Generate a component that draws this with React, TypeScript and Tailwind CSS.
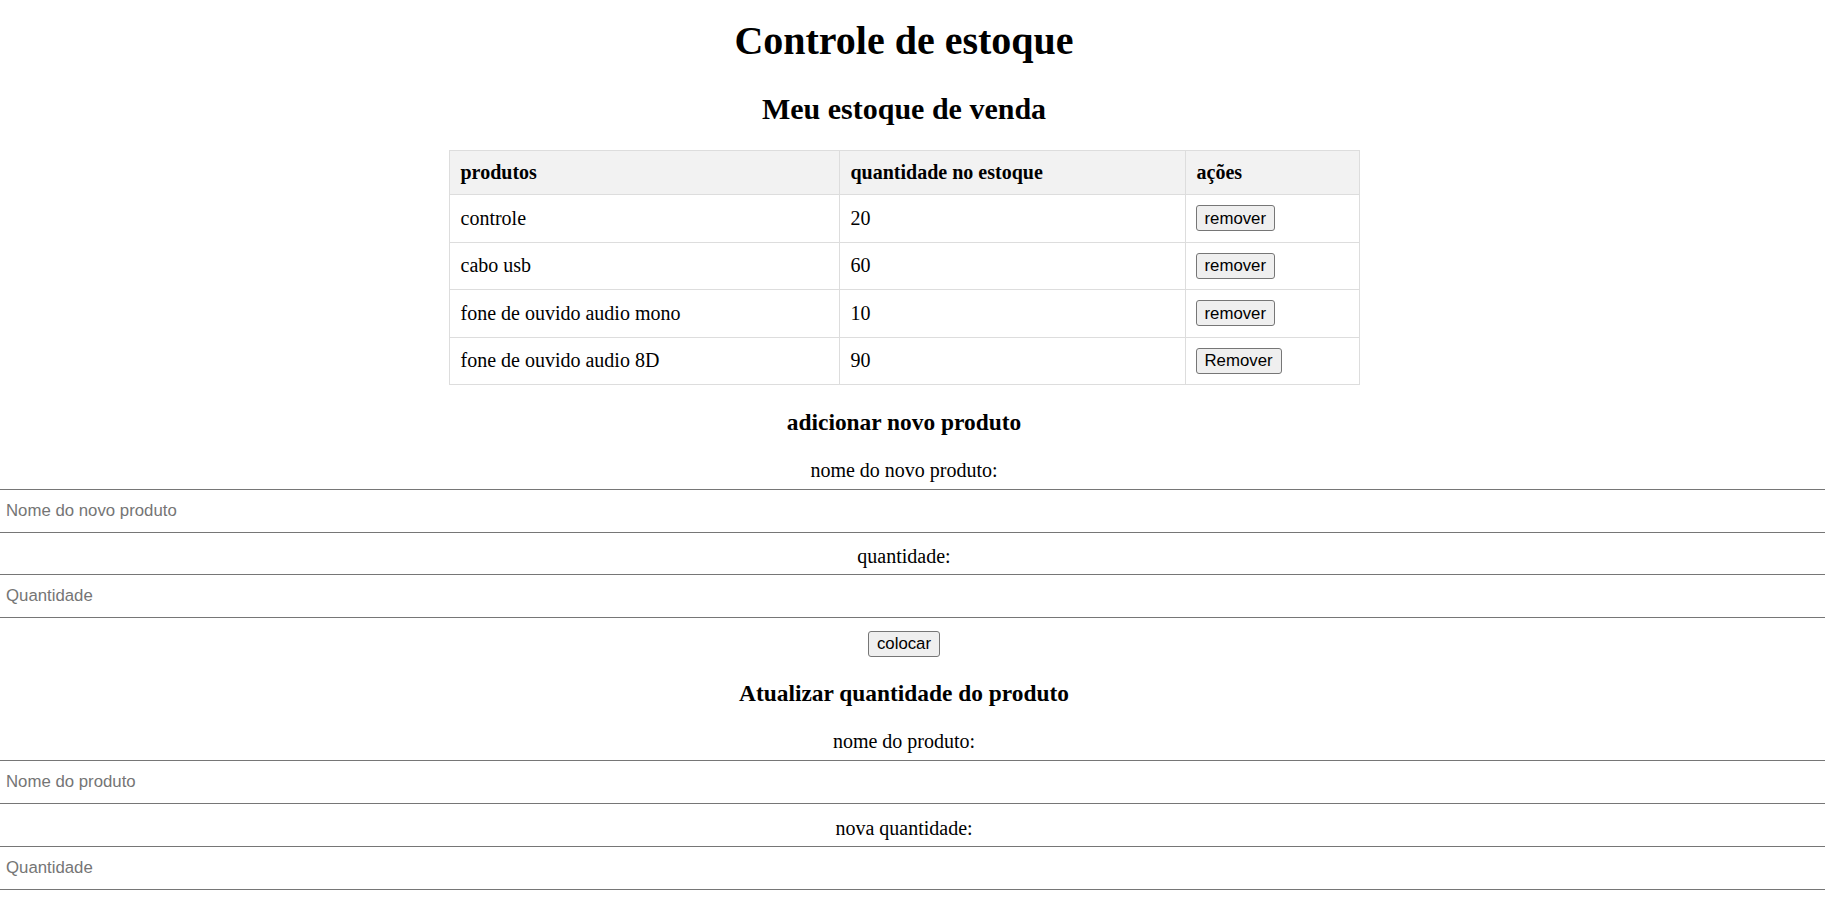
const produtos = [
  { nome: "controle", qtd: 20, acao: "remover" },
  { nome: "cabo usb", qtd: 60, acao: "remover" },
  { nome: "fone de ouvido audio mono", qtd: 10, acao: "remover" },
  { nome: "fone de ouvido audio 8D", qtd: 90, acao: "Remover" },
];

const Botao = ({ children }: { children: React.ReactNode }) => (
  <button className="h-[26px] px-[8px] border border-[#767676] rounded-[3px] bg-[#efefef] text-[16.8px] leading-[19px] text-black font-['Liberation_Sans',Arial,sans-serif]">
    {children}
  </button>
);

const Campo = ({ label, placeholder, first }: { label: string; placeholder: string; first?: boolean }) => (
  <>
    <div className={`${first ? "mt-[23.4px]" : "mt-[12.5px]"} w-[1808px] text-center text-[20px] leading-[23px]`}>
      {label}
    </div>
    <input
      placeholder={placeholder}
      className={`${first ? "mt-[7px]" : "mt-[6px]"} block w-full h-[44px] px-[6px] border-y border-[#767676] bg-white outline-none text-[16.8px] font-['Liberation_Sans',Arial,sans-serif] placeholder:text-[#757575]`}
    />
  </>
);

export default function App() {
  return (
    <div className="w-[1825px] h-[900px] overflow-hidden bg-white text-black font-['Liberation_Serif','Times_New_Roman',serif]">
      <div className="w-[1808px] text-center">
        <h1 className="pt-[17.5px] text-[40px] leading-[46px] font-bold">Controle de estoque</h1>
        <h2 className="mt-[28px] text-[30px] leading-[34.5px] font-bold">Meu estoque de venda</h2>
      </div>

      <div className="w-[1808px] mt-[24px]">
        <div className="mx-auto w-[911px] grid grid-cols-[390px_346px_174px] border-l border-t border-[#dddddd] text-left text-[20px] leading-[23px]">
          {["produtos", "quantidade no estoque", "ações"].map((h) => (
            <div key={h} className="h-[44px] px-[11px] flex items-center bg-[#f2f2f2] font-bold border-r border-b border-[#dddddd]">
              {h}
            </div>
          ))}
          {produtos.map((p) => (
            <div key={p.nome} className="contents">
              <div className="h-[47.5px] px-[11px] flex items-center border-r border-b border-[#dddddd]">{p.nome}</div>
              <div className="h-[47.5px] px-[11px] flex items-center border-r border-b border-[#dddddd]">{p.qtd}</div>
              <div className="h-[47.5px] px-[10px] flex items-center border-r border-b border-[#dddddd]">
                <Botao>{p.acao}</Botao>
              </div>
            </div>
          ))}
        </div>
      </div>

      <h3 className="mt-[23.6px] w-[1808px] text-center text-[23.4px] leading-[26.9px] font-bold">adicionar novo produto</h3>
      <Campo first label="nome do novo produto:" placeholder="Nome do novo produto" />
      <Campo label="quantidade:" placeholder="Quantidade" />
      <div className="mt-[12.5px] w-[1808px] flex justify-center">
        <Botao>colocar</Botao>
      </div>

      <h3 className="mt-[23px] w-[1808px] text-center text-[23.4px] leading-[26.9px] font-bold">Atualizar quantidade do produto</h3>
      <Campo first label="nome do produto:" placeholder="Nome do produto" />
      <Campo label="nova quantidade:" placeholder="Quantidade" />
    </div>
  );
}
